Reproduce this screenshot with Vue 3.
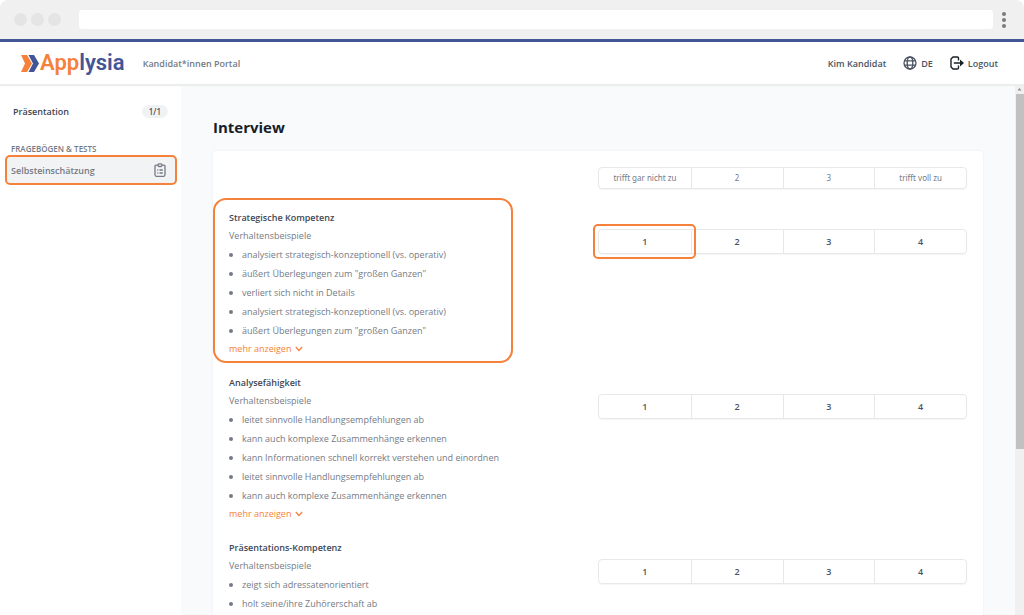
<script setup>
import { ref } from 'vue'

const address = ref('')
const scale = ['trifft gar nicht zu', '2', '3', 'trifft voll zu']
const competencies = [
  {
    title: 'Strategische Kompetenz',
    marked: true,
    more: true,
    items: [
      'analysiert strategisch-konzeptionell (vs. operativ)',
      'äußert Überlegungen zum "großen Ganzen"',
      'verliert sich nicht in Details',
      'analysiert strategisch-konzeptionell (vs. operativ)',
      'äußert Überlegungen zum "großen Ganzen"',
    ],
  },
  {
    title: 'Analysefähigkeit',
    more: true,
    items: [
      'leitet sinnvolle Handlungsempfehlungen ab',
      'kann auch komplexe Zusammenhänge erkennen',
      'kann Informationen schnell korrekt verstehen und einordnen',
      'leitet sinnvolle Handlungsempfehlungen ab',
      'kann auch komplexe Zusammenhänge erkennen',
    ],
  },
  {
    title: 'Präsentations-Kompetenz',
    items: ['zeigt sich adressatenorientiert', 'holt seine/ihre Zuhörerschaft ab'],
  },
]
</script>

<template>
  <div class="window">
    <div class="chrome">
      <div class="dots"><i></i><i></i><i></i></div>
      <input v-model="address" class="address" type="text" aria-label="Adresse" />
      <button class="kebab" type="button" aria-label="Menü"><i></i><i></i><i></i></button>
    </div>

    <header class="topbar">
      <a class="logo" href="#">
        <svg class="mark" viewBox="0 0 18 17" aria-hidden="true">
          <path fill="#f5813a" d="M0 0h6l5 8.500L6 17H0l4-8.500z" />
          <path fill="#425596" d="M7.500 0H13l5 8.500L13 17H7.500l4.500-8.500z" />
        </svg>
        <span class="word"><b>App</b>lysia</span>
      </a>
      <span class="portal">Kandidat*innen Portal</span>
      <nav class="user">
        <a href="#">Kim Kandidat</a>
        <a href="#" class="lang">
          <svg viewBox="0 0 14 14" fill="none" stroke="currentColor" stroke-width="1.300" aria-hidden="true">
            <circle cx="7" cy="7" r="6" />
            <ellipse cx="7" cy="7" rx="2.800" ry="6" />
            <path d="M1.500 4.800h11M1.500 9.200h11" />
          </svg>
          DE
        </a>
        <a href="#" class="logout">
          <svg viewBox="0 0 14 14" fill="none" stroke="#1b1f26" stroke-width="1.400" stroke-linejoin="round" aria-hidden="true">
            <path d="M8.500 4.500V2.300Q8.500 1 7.200 1H3L1 3v8l2 2h4.200q1.300 0 1.300-1.300V9.500M3.800 7H12" />
            <path fill="#1b1f26" stroke="none" d="M10 3.500 14 7l-4 3.500z" />
          </svg>
          Logout
        </a>
      </nav>
    </header>

    <div class="body">
      <aside class="sidebar">
        <a class="entry" href="#">Präsentation <span class="badge">1/1</span></a>
        <h2>FRAGEBÖGEN &amp; TESTS</h2>
        <a class="active" href="#">
          Selbsteinschätzung
          <svg viewBox="0 0 12 14" fill="none" stroke="currentColor" stroke-width="1.300" aria-hidden="true">
            <path d="M4 2.200H2.300Q1 2.200 1 3.500v8.300Q1 13.300 2.300 13.300h7.400Q11 13.300 11 11.800V3.500Q11 2.200 9.700 2.200H8" />
            <rect x="4" y="0.800" width="4" height="2.700" rx="1.200" />
            <path d="M3.300 7h1M5.500 7h3.300M3.300 10h1M5.500 10h3.300" />
          </svg>
        </a>
      </aside>

      <main>
        <h1>Interview</h1>
        <section class="card">
          <div class="row head">
            <div class="group labels"><span v-for="s in scale" :key="s">{{ s }}</span></div>
          </div>
          <article v-for="c in competencies" :key="c.title" class="row" :class="{ marked: c.marked }">
            <div class="text">
              <h3>{{ c.title }}</h3>
              <p>Verhaltensbeispiele</p>
              <ul>
                <li v-for="(item, i) in c.items" :key="i">{{ item }}</li>
              </ul>
              <button v-if="c.more" class="more" type="button">
                mehr anzeigen
                <svg viewBox="0 0 8 6" fill="none" stroke="currentColor" stroke-width="1.200" aria-hidden="true"><path d="M.8 1 4 4.500 7.200 1" /></svg>
              </button>
            </div>
            <div class="group rating" role="group" :aria-label="c.title">
              <button v-for="n in 4" :key="n" type="button">{{ n }}</button>
            </div>
          </article>
        </section>
      </main>

      <div class="scroll" aria-hidden="true">
        <svg viewBox="0 0 9 9"><path fill="#8f8f8f" d="M2.500 5.500h4l-2-2.500z" /></svg>
        <div class="thumb"></div>
      </div>
    </div>
  </div>
</template>

<style>
body {
  background: #fff;
  overflow: hidden;
}
</style>

<style scoped>
*,
*::before,
*::after {
  box-sizing: border-box;
  margin: 0;
  padding: 0;
}
.window {
  height: 100vh;
  display: flex;
  flex-direction: column;
  font-family: "Open Sans", "Noto Sans", sans-serif;
  font-size: 9px;
  color: #747b86;
}
a {
  color: inherit;
  text-decoration: none;
}
button {
  font: inherit;
  color: inherit;
  background: none;
  border: 0;
}
.chrome {
  flex: none;
  height: 39px;
  display: flex;
  align-items: center;
  padding: 0 14px;
  background: #f0f0f0;
  border-radius: 8px 8px 0 0;
}
.dots {
  display: flex;
  gap: 4px;
  margin-right: 18px;
}
.dots i {
  width: 13px;
  height: 13px;
  border-radius: 50%;
  background: #e4e4e4;
}
.address {
  flex: 1;
  height: 19px;
  border: 0;
  border-radius: 3px;
  background: #fff;
}
.kebab {
  display: flex;
  flex-direction: column;
  align-items: center;
  gap: 2px;
  width: 5px;
  margin: 0 4px 0 8px;
}
.kebab i {
  width: 4px;
  height: 4px;
  border-radius: 50%;
  background: #7b7b7b;
}
.topbar {
  flex: none;
  height: 46px;
  display: flex;
  align-items: center;
  padding: 0 26px 0 21px;
  border-top: 3px solid #425596;
  border-bottom: 1px solid #eceded;
  box-shadow: 0 1px 1px #eceded;
  z-index: 1;
  font-weight: 600;
}
.logo {
  display: flex;
  align-items: center;
  gap: 1px;
}
.mark {
  width: 18px;
  height: 17px;
}
.word {
  font: 600 22px/24px Roboto, sans-serif;
  color: #425596;
}
.word b {
  font-weight: 600;
  color: #f5813a;
}
.portal {
  margin-left: 18px;
}
.user {
  margin-left: auto;
  display: flex;
  gap: 17px;
  color: #4b5361;
}
.user a {
  display: flex;
  align-items: center;
  gap: 4px;
}
.user svg {
  width: 14px;
  height: 14px;
}
.body {
  flex: 1;
  min-height: 0;
  display: flex;
}
.sidebar {
  flex: none;
  width: 181px;
  padding: 16px 4px 0 5px;
}
.entry {
  display: flex;
  align-items: center;
  justify-content: space-between;
  height: 21px;
  padding: 0 9px 0 8px;
  font-weight: 600;
  color: #3f4651;
}
.badge {
  padding: 0 7px;
  line-height: 13px;
  border-radius: 7px;
  background: #f1f2f4;
  font-family: "Noto Sans", sans-serif;
  font-size: 8px;
  font-weight: 500;
}
.sidebar h2 {
  margin-top: 20px;
  padding-left: 6px;
  font-size: 8px;
  line-height: 13px;
  font-weight: 600;
}
.active {
  display: flex;
  align-items: center;
  justify-content: space-between;
  height: 30px;
  padding: 0 9px 0 4px;
  border: 2px solid #f5813a;
  border-radius: 5px;
  background: #f2f3f5;
  font-weight: 600;
}
.active svg {
  width: 12px;
  height: 14px;
}
main {
  flex: 1;
  min-width: 0;
  padding: 31px 32px 0;
  background: #f8fafc;
  display: flex;
  flex-direction: column;
  overflow: hidden;
}
h1 {
  font-size: 15px;
  line-height: 22px;
  font-weight: 700;
  color: #161d2b;
}
.card {
  flex: 1;
  margin-top: 13px;
  padding: 16px;
  background: #fff;
  border-radius: 4px;
  box-shadow: 0 0 2px #e6e8eb;
}
.row {
  position: relative;
  display: grid;
  grid-template-columns: 1fr 1fr;
  align-items: start;
  margin-bottom: 16px;
}
.row.head {
  margin-bottom: 19px;
}
.group {
  grid-column: 2;
  display: grid;
  grid-template-columns: repeat(4, 1fr);
  border: 1px solid #e6e8ea;
  border-radius: 4px;
  box-shadow: 0 1px 1px #f4f5f6;
  text-align: center;
}
.group > * + * {
  border-left: 1px solid #e6e8ea;
}
.labels {
  font-family: "Noto Sans", sans-serif;
  font-size: 8px;
  line-height: 20px;
}
.rating {
  margin-top: 21px;
}
.rating button {
  height: 23px;
  font-weight: 600;
  color: #4b5360;
}
h3 {
  font-size: 9px;
  line-height: 19px;
  font-weight: 600;
  color: #414855;
}
p {
  line-height: 18px;
}
ul {
  list-style: none;
}
li {
  display: flex;
  align-items: center;
  line-height: 19px;
}
li::before {
  content: "";
  width: 4px;
  height: 4px;
  margin-right: 9px;
  border-radius: 50%;
  background: #747b86;
}
.more {
  display: flex;
  align-items: center;
  gap: 4px;
  line-height: 17px;
  color: #f5813a;
}
.more svg {
  width: 8px;
  height: 6px;
}
.marked::before,
.marked::after {
  content: "";
  position: absolute;
  border: 2px solid #f5813a;
  pointer-events: none;
}
.marked::before {
  left: -16px;
  top: -10px;
  bottom: -6px;
  width: 300px;
  border-radius: 13px;
}
.marked::after {
  left: calc(50% - 5px);
  top: 16px;
  width: calc(12.5% + 11px);
  height: 35px;
  border-radius: 5px;
}
.scroll {
  flex: none;
  width: 9px;
  background: #f0f0f0;
}
.scroll svg {
  display: block;
  width: 9px;
  height: 9px;
}
.thumb {
  height: 67%;
  margin-left: 1px;
  background: #c1c1c1;
}
</style>
